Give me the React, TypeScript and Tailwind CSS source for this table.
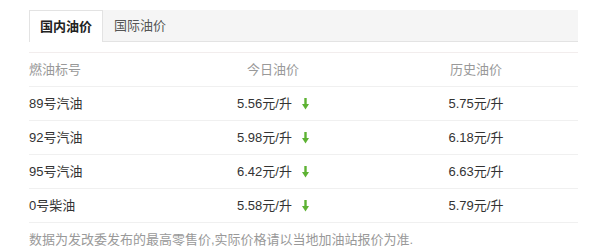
import React from "react";

const rows = [
  { name: "89号汽油", today: "5.56元/升", hist: "5.75元/升" },
  { name: "92号汽油", today: "5.98元/升", hist: "6.18元/升" },
  { name: "95号汽油", today: "6.42元/升", hist: "6.63元/升" },
  { name: "0号柴油", today: "5.58元/升", hist: "5.79元/升" },
];

function Down() {
  return (
    <svg width="7" height="12" viewBox="0 0 7 12" className="block">
      <rect x="2.3" y="0" width="2.4" height="7" fill="#5db233" />
      <polygon points="0,6 7,6 3.5,11.5" fill="#5db233" />
    </svg>
  );
}

export default function App() {
  return (
    <div
      className="bg-white w-[598px] h-[249px] pt-[10px] pl-[29px]"
      style={{ fontFamily: '"Liberation Sans", Arial, "Noto Sans CJK SC", sans-serif' }}
    >
      <div className="w-[549px]">
        <div className="flex h-[32px] bg-[#f5f5f5] border-b border-[#e3e3e3]">
          <div className="h-[32px] px-[10px] bg-white border border-b-0 border-[#e3e3e3] flex items-center text-[13px] font-bold text-[#222]">
            国内油价
          </div>
          <div className="h-[31px] px-[11px] flex items-center text-[13px] text-[#555]">
            国际油价
          </div>
        </div>
        <div className="mt-[10px] border-t border-[#f2eded] text-[13px]">
          <div className="flex h-[34px] items-center border-b border-[#f0f0f0] text-[#999]">
            <div className="w-[143px]">燃油标号</div>
            <div className="w-[202px] text-center">今日油价</div>
            <div className="w-[204px] text-center">历史油价</div>
          </div>
          {rows.map((r) => (
            <div key={r.name} className="flex h-[34px] items-center border-b border-[#f0f0f0] text-[#333]">
              <div className="w-[143px]">{r.name}</div>
              <div className="w-[202px] flex justify-center items-center gap-[10px]">
                <span>{r.today}</span>
                <Down />
              </div>
              <div className="w-[204px] text-center">{r.hist}</div>
            </div>
          ))}
        </div>
        <div className="pt-[7px] text-[13px] text-[#999] leading-[20px]">
          数据为发改委发布的最高零售价,实际价格请以当地加油站报价为准.
        </div>
      </div>
    </div>
  );
}
